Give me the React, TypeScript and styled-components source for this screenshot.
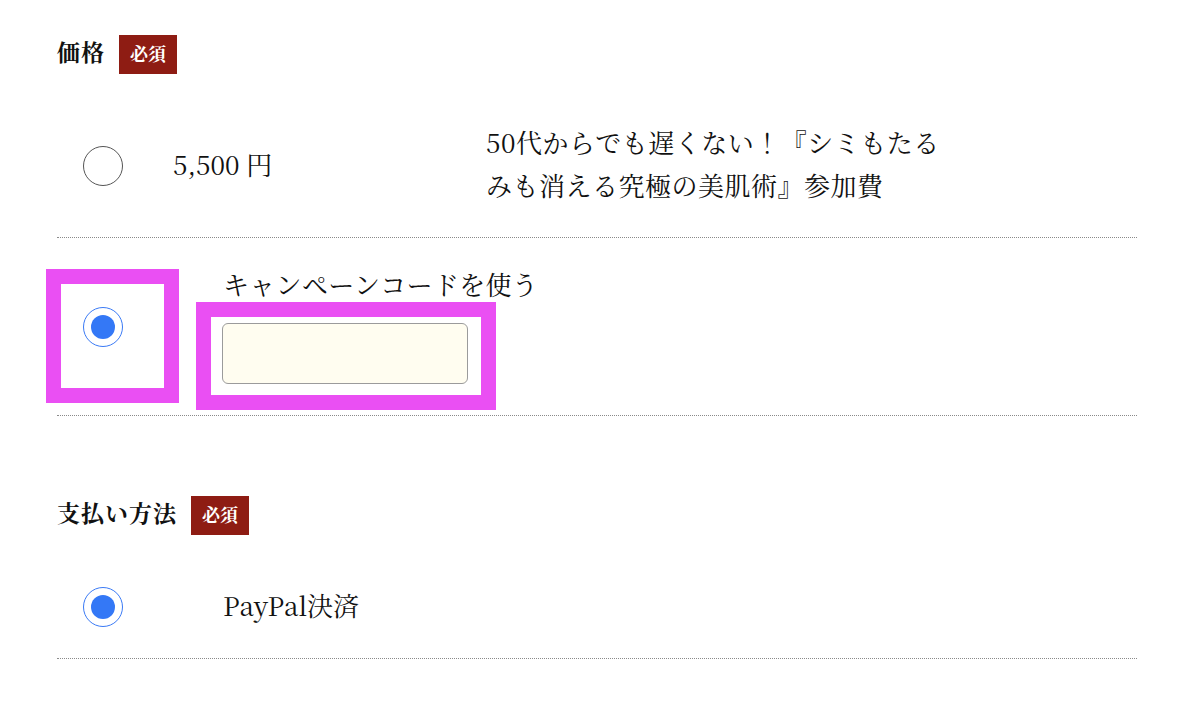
import React from "react";
import styled, { createGlobalStyle } from "styled-components";

const Global = createGlobalStyle`
  html, body { margin: 0; padding: 0; background: #fff; }
  body {
    font-family: "Noto Serif CJK JP", "Liberation Serif", "Noto Sans CJK JP", serif;
    color: #111;
  }
`;

const Page = styled.div`
  width: 1080px;
  padding: 35px 0 40px 57px;
`;

const Section = styled.section<{ $gap?: number }>`
  margin-top: ${(p) => p.$gap ?? 0}px;
`;

const HeadingRow = styled.div`
  display: flex;
  align-items: center;
  gap: 14px;
  height: 39px;
  margin-bottom: 21px;
`;

const HeadingLabel = styled.h2`
  margin: -3px 0 3px;
  font-size: 23px;
  font-weight: 700;
  line-height: 39px;
  letter-spacing: 1px;
`;

const Badge = styled.span`
  display: inline-block;
  height: 39px;
  line-height: 37px;
  padding: 0 11px;
  background: #8e1c13;
  color: #fff;
  font-size: 18px;
  font-weight: 700;
`;

const Row = styled.label<{ $top?: boolean; $pb?: number }>`
  display: flex;
  align-items: ${(p) => (p.$top ? "flex-start" : "center")};
  padding: 28px 0 ${(p) => p.$pb ?? 28}px;
  border-bottom: 1px dotted #8a8a8a;
  font-size: 26px;
`;

const RadioCell = styled.div<{ $tall?: boolean; $mark?: boolean }>`
  box-sizing: border-box;
  flex: 0 0 103px;
  width: 103px;
  height: ${(p) => (p.$tall ? 104 : 46)}px;
  margin-left: 4px;
  margin-top: ${(p) => (p.$tall ? 18 : 0)}px;
  display: flex;
  align-items: ${(p) => (p.$tall ? "flex-start" : "center")};
  padding-left: 22px;
  padding-top: ${(p) => (p.$tall ? 23 : 0)}px;
  outline: ${(p) => (p.$mark ? "15px solid #ea4ff3" : "none")};
`;

const Radio = styled.input.attrs({ type: "radio" })`
  appearance: none;
  -webkit-appearance: none;
  box-sizing: border-box;
  width: 40px;
  height: 40px;
  margin: 0;
  border-radius: 50%;
  border: 1.5px solid #555;
  background: #fff;
  display: grid;
  place-items: center;
  &:checked {
    border: 1.5px solid #3a7af5;
  }
  &:checked::after {
    content: "";
    width: 24px;
    height: 24px;
    border-radius: 50%;
    background: #3478f6;
  }
`;

const TextCell = styled.div<{ $width?: number; $pad?: number; $ls?: number }>`
  box-sizing: border-box;
  flex: ${(p) => (p.$width ? `0 0 ${p.$width}px` : "0 1 auto")};
  margin: -3px 0 3px;
  padding-left: ${(p) => p.$pad ?? 0}px;
  line-height: 43px;
  letter-spacing: ${(p) => p.$ls ?? 0}px;
`;

const CodeCol = styled.div`
  margin-left: 47px;
  display: flex;
  flex-direction: column;
  align-items: flex-start;
`;

const CodeLabel = styled.div`
  margin: -2px 0 2px;
  padding-left: 12px;
  line-height: 39px;
  letter-spacing: 0.3px;
`;

const InputFrame = styled.div<{ $mark?: boolean }>`
  margin-top: 12px;
  padding: 6px 13px 11px 11px;
  outline: ${(p) => (p.$mark ? "15px solid #ea4ff3" : "none")};
`;

const CodeInput = styled.input`
  box-sizing: border-box;
  width: 246px;
  height: 61px;
  border: 1px solid #9b9b9b;
  border-radius: 6px;
  background: #fffdf0;
  font: inherit;
  padding: 0 10px;
  display: block;
`;

export default function App() {
  return (
    <Page>
      <Global />
      <Section>
        <HeadingRow>
          <HeadingLabel>価格</HeadingLabel>
          <Badge>必須</Badge>
        </HeadingRow>
        <Row>
          <RadioCell>
            <Radio name="price" />
          </RadioCell>
          <TextCell $width={322} $pad={9}>5,500 円</TextCell>
          <TextCell $width={464} $ls={0.5}>
            50代からでも遅くない！『シミもたるみも消える究極の美肌術』参加費
          </TextCell>
        </Row>
        <Row $top $pb={20} as="div">
          <RadioCell $tall $mark>
            <Radio name="price" defaultChecked />
          </RadioCell>
          <CodeCol>
            <CodeLabel>キャンペーンコードを使う</CodeLabel>
            <InputFrame $mark>
              <CodeInput type="text" />
            </InputFrame>
          </CodeCol>
        </Row>
      </Section>
      <Section $gap={80}>
        <HeadingRow>
          <HeadingLabel>支払い方法</HeadingLabel>
          <Badge>必須</Badge>
        </HeadingRow>
        <Row>
          <RadioCell>
            <Radio name="pay" defaultChecked />
          </RadioCell>
          <TextCell $pad={59}>PayPal決済</TextCell>
        </Row>
      </Section>
    </Page>
  );
}
